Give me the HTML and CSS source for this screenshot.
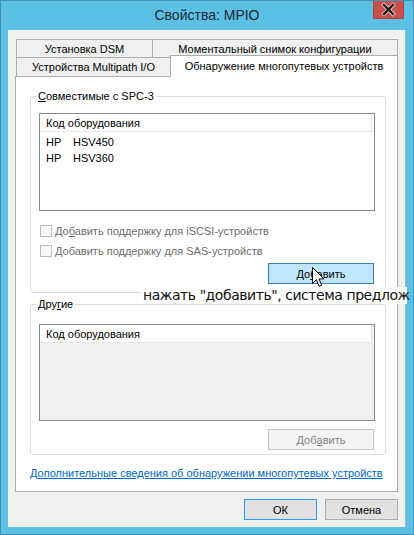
FILE: index.html
```html
<!DOCTYPE html>
<html lang="ru">
<head>
<meta charset="utf-8">
<title>Свойства: MPIO</title>
<link rel="stylesheet" href="styles.css">
</head>
<body>
<div class="window">
  <div class="titlebar">
    <span class="spacer"></span>
    <span class="title">Свойства: MPIO</span>
    <span class="controls">
      <span class="close">
        <svg width="31" height="19" viewBox="0 0 31 19">
          <path d="M11 5 L20 14 M20 5 L11 14" stroke="#f3d3d1" stroke-width="4" stroke-linecap="square"/>
          <path d="M11 5 L20 14 M20 5 L11 14" stroke="#1b1b1b" stroke-width="2.4" stroke-linecap="square"/>
        </svg>
      </span>
    </span>
  </div>
  <div class="client">
    <div class="tabs">
      <div class="tabrow back">
        <div class="tab t-dsm">Установка DSM</div>
        <div class="tab t-snap">Моментальный снимок конфигурации</div>
      </div>
      <div class="tabrow front">
        <div class="tab t-mp">Устройства Multipath I/O</div>
        <div class="tab selected">Обнаружение многопутевых устройств</div>
      </div>
    </div>
    <div class="panel">
      <fieldset class="group g1">
        <legend><u>С</u>овместимые с SPC-3</legend>
        <div class="list l1">
          <div class="list-head"><span>Код оборудования</span></div>
          <div class="rows">
            <div class="row"><span class="vendor">HP</span><span>HSV450</span></div>
            <div class="row"><span class="vendor">HP</span><span>HSV360</span></div>
          </div>
        </div>
        <div class="checks">
          <label class="check"><span class="box"></span><span>До<u>б</u>авить поддержку для iSCSI-устройств</span></label>
          <label class="check"><span class="box"></span><span><u>Д</u>обавить поддержку для SAS-устройств</span></label>
        </div>
        <div class="btnrow"><span class="btn hot">До<u>б</u>авить</span></div>
      </fieldset>
      <fieldset class="group g2">
        <legend>Дру<u>г</u>ие</legend>
        <div class="list l2">
          <div class="list-head"><span>Код оборудования</span></div>
        </div>
        <div class="btnrow"><span class="btn off">Доб<u>а</u>вить</span></div>
      </fieldset>
      <a class="link" href="#">Дополнительные сведения об обнаружении многопутевых устройств</a>
    </div>
    <div class="footer">
      <span class="btn default">ОК</span>
      <span class="btn">Отмена</span>
    </div>
  </div>
  <div class="caption">нажать "добавить", система предлож</div>
  <svg class="cursor" width="13" height="21" viewBox="0 0 13 21">
    <path d="M0.5 0.5 L0.5 16.5 L4.5 12.8 L7.2 19.3 L9.6 18.3 L7 11.9 L12 11.9 Z" fill="#fff" stroke="#000" stroke-width="1" stroke-linejoin="miter"/>
  </svg>
</div>
</body>
</html>
```

FILE: styles.css
```css
* { box-sizing: border-box; }
html, body { margin: 0; padding: 0; }
body {
  width: 414px;
  height: 535px;
  overflow: hidden;
  font-family: "Liberation Sans", Arial, sans-serif;
  font-size: 11px;
  color: #000;
  background: #5bc0e4;
}
u { text-decoration: underline; text-underline-offset: 1px; }

.window {
  position: relative;
  width: 414px;
  height: 535px;
  background: #5bc0e4;
  border: 1px solid #3f93b6;
  padding: 0 7px 7px 7px;
  display: flex;
  flex-direction: column;
  overflow: hidden;
}

.titlebar {
  height: 29px;
  flex: none;
  display: grid;
  grid-template-columns: 1fr auto 1fr;
  align-items: start;
}
.title {
  font-size: 14px;
  line-height: 16px;
  margin-top: 6px;
  color: #1c2a33;
}
.controls { justify-self: end; margin-right: 2px; }
.close {
  display: block;
  width: 31px;
  height: 19px;
  background: #c7504b;
  border: 1px solid #b0433e;
  border-top: none;
}
.close svg { display: block; margin: -1px 0 0 -1px; }

.client {
  flex: 1;
  background: #f0f0f0;
  border-right: 1px solid #9fb8c4;
  padding: 8px 7px 6px 7px;
  display: flex;
  flex-direction: column;
}

.tabs {
  flex: none;
  height: 39px;
  margin-bottom: -1px;
  display: flex;
  flex-direction: column;
  position: relative;
  z-index: 1;
}
.tabrow { display: flex; padding-left: 1px; }
.tabrow.back { margin-top: 1px; height: 18px; }
.tabrow.front { height: 20px; }
.tab {
  background: #f0f0f0;
  border: 1px solid #acacac;
  border-bottom: none;
  display: flex;
  align-items: center;
  justify-content: center;
  white-space: nowrap;
}
.back .tab { height: 18px; padding-top: 1px; }
.t-dsm { width: 137px; }
.t-snap { width: 246px; margin-left: -1px; }
.front .tab { height: 20px; }
.t-mp { width: 155px; border-bottom: 1px solid #acacac; height: 19px; }
.tab.selected {
  width: 228px;
  margin-left: -1px;
  margin-top: -2px;
  height: 22px;
  background: #fff;
  padding-bottom: 2px;
}

.panel {
  flex: none;
  height: 416px;
  background: #fff;
  border: 1px solid #acacac;
  padding: 12px 11px 0 14px;
  display: flex;
  flex-direction: column;
}

.group {
  margin: 0;
  min-width: 0;
  border: 1px solid #dcdcdc;
  border-radius: 3px;
  padding: 10px 10px 8px 8px;
}
.group legend {
  padding: 0 2px;
  margin-left: -3px;
  line-height: 14px;
}
.g2 { margin-top: 4px; padding-top: 13px; padding-bottom: 4px; }

.list {
  border: 1px solid #828790;
  background: #fff;
}
.l1 { height: 98px; }
.l2 { height: 97px; background: #f0f0f0; }
.list-head {
  height: 18px;
  background: #fff;
  border-bottom: 1px solid #e5e5e5;
  padding-left: 6px;
  display: flex;
  align-items: center;
  margin-right: 2px;
  border-right: 1px solid #e5e5e5;
}
.rows { padding-top: 2px; }
.row {
  height: 16px;
  display: flex;
  align-items: center;
  padding-left: 6px;
}
.vendor { width: 27px; }

.checks { margin-top: 10px; }
.check {
  height: 20px;
  display: flex;
  align-items: center;
  gap: 3px;
  color: #6d6d6d;
  padding-left: 1px;
}
.box {
  width: 12px;
  height: 12px;
  border: 1px solid #bcbcbc;
  background: #f7f7f7;
}

.btnrow {
  display: flex;
  justify-content: flex-end;
  margin-top: 2px;
  padding-right: 1px;
}
.g2 .btnrow { margin-top: 8px; }

.btn {
  display: flex;
  align-items: center;
  justify-content: center;
  height: 21px;
  border: 1px solid #adadad;
  background: #e1e1e1;
}
.btnrow .btn { width: 106px; }
.btn.hot { background: #bee6fd; border-color: #3c7fb1; }
.btn.off { background: #f4f4f4; border-color: #c4c4c4; color: #838383; }

.link {
  margin-top: 11px;
  line-height: 15px;
  color: #0066cc;
  text-decoration: underline;
  white-space: nowrap;
}

.footer {
  flex: none;
  display: flex;
  justify-content: flex-end;
  gap: 8px;
  margin-top: 7px;
}
.footer .btn { width: 73px; height: 21px; }
.btn.default { border-color: #3399ff; }

.caption {
  position: absolute;
  left: 140px;
  top: 286px;
  width: 266px;
  height: 17px;
  padding: 0 2px;
  background: #fff;
  font-family: "DejaVu Sans", sans-serif;
  font-size: 14px;
  letter-spacing: -0.45px;
  line-height: 17px;
  white-space: nowrap;
  color: #111;
}
.cursor {
  position: absolute;
  left: 311px;
  top: 266px;
}
```
